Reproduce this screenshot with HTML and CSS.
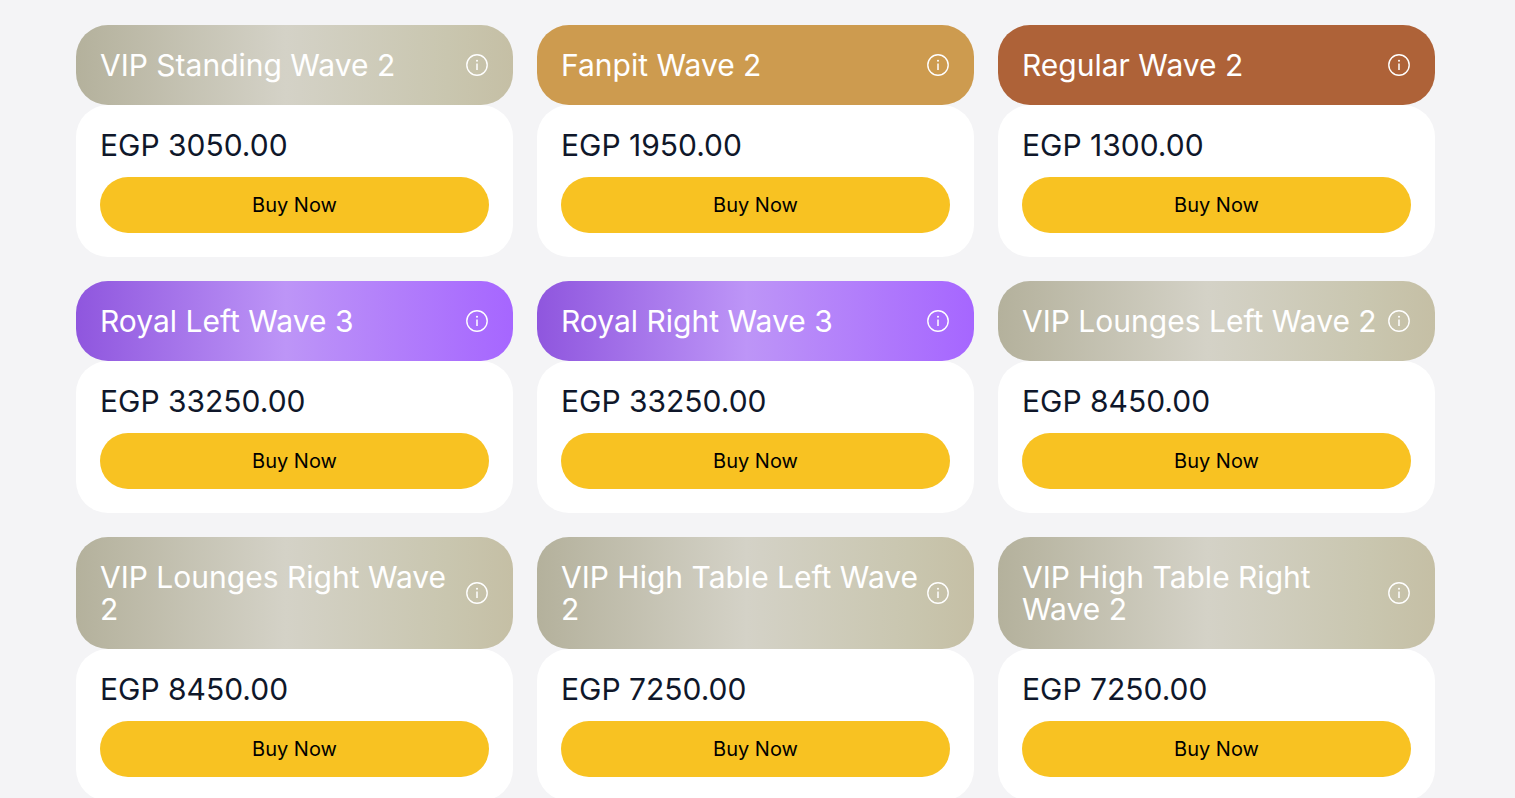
FILE: index.html
```html
<!DOCTYPE html>
<html lang="en">

<head>
  <meta charset="UTF-8">
  <meta name="viewport" content="width=device-width, initial-scale=1.0">
  <title>Tickets</title>
  <link rel="stylesheet" href="styles.css">
</head>

<body>
  <svg class="sprite" xmlns="http://www.w3.org/2000/svg">
    <symbol id="icon-info" viewBox="0 0 24 24">
      <circle cx="12" cy="12" r="10.2" fill="none" stroke="currentColor" stroke-width="1.4"></circle>
      <path d="M12 10.5v6.5" fill="none" stroke="currentColor" stroke-width="1.5"></path>
      <circle cx="12" cy="7.8" r="1" fill="currentColor"></circle>
    </symbol>
  </svg>

  <main class="tickets">
    <article class="ticket">
      <header class="ticket-header silver">
        <h2>VIP Standing Wave 2</h2>
        <button class="info-btn" aria-label="Details"><svg><use href="#icon-info"></use></svg></button>
      </header>
      <div class="ticket-body">
        <p class="price">EGP 3050.00</p>
        <button class="buy-btn">Buy Now</button>
      </div>
    </article>

    <article class="ticket">
      <header class="ticket-header gold">
        <h2>Fanpit Wave 2</h2>
        <button class="info-btn" aria-label="Details"><svg><use href="#icon-info"></use></svg></button>
      </header>
      <div class="ticket-body">
        <p class="price">EGP 1950.00</p>
        <button class="buy-btn">Buy Now</button>
      </div>
    </article>

    <article class="ticket">
      <header class="ticket-header bronze">
        <h2>Regular Wave 2</h2>
        <button class="info-btn" aria-label="Details"><svg><use href="#icon-info"></use></svg></button>
      </header>
      <div class="ticket-body">
        <p class="price">EGP 1300.00</p>
        <button class="buy-btn">Buy Now</button>
      </div>
    </article>

    <article class="ticket">
      <header class="ticket-header royal">
        <h2>Royal Left Wave 3</h2>
        <button class="info-btn" aria-label="Details"><svg><use href="#icon-info"></use></svg></button>
      </header>
      <div class="ticket-body">
        <p class="price">EGP 33250.00</p>
        <button class="buy-btn">Buy Now</button>
      </div>
    </article>

    <article class="ticket">
      <header class="ticket-header royal">
        <h2>Royal Right Wave 3</h2>
        <button class="info-btn" aria-label="Details"><svg><use href="#icon-info"></use></svg></button>
      </header>
      <div class="ticket-body">
        <p class="price">EGP 33250.00</p>
        <button class="buy-btn">Buy Now</button>
      </div>
    </article>

    <article class="ticket">
      <header class="ticket-header silver">
        <h2>VIP Lounges Left Wave 2</h2>
        <button class="info-btn" aria-label="Details"><svg><use href="#icon-info"></use></svg></button>
      </header>
      <div class="ticket-body">
        <p class="price">EGP 8450.00</p>
        <button class="buy-btn">Buy Now</button>
      </div>
    </article>

    <article class="ticket">
      <header class="ticket-header silver">
        <h2>VIP Lounges Right Wave 2</h2>
        <button class="info-btn" aria-label="Details"><svg><use href="#icon-info"></use></svg></button>
      </header>
      <div class="ticket-body">
        <p class="price">EGP 8450.00</p>
        <button class="buy-btn">Buy Now</button>
      </div>
    </article>

    <article class="ticket">
      <header class="ticket-header silver">
        <h2>VIP High Table Left Wave 2</h2>
        <button class="info-btn" aria-label="Details"><svg><use href="#icon-info"></use></svg></button>
      </header>
      <div class="ticket-body">
        <p class="price">EGP 7250.00</p>
        <button class="buy-btn">Buy Now</button>
      </div>
    </article>

    <article class="ticket">
      <header class="ticket-header silver">
        <h2>VIP High Table Right Wave 2</h2>
        <button class="info-btn" aria-label="Details"><svg><use href="#icon-info"></use></svg></button>
      </header>
      <div class="ticket-body">
        <p class="price">EGP 7250.00</p>
        <button class="buy-btn">Buy Now</button>
      </div>
    </article>
  </main>
</body>

</html>
```
FILE: styles.css
```css
:root {
  --page: #f4f4f6;
  --text: #0f172a;
  --yellow: #f8c222;
  --gold: #cd9b4f;
  --bronze: #ae6238;
}

* {
  margin: 0;
  padding: 0;
  box-sizing: border-box;
  font-family: 'Inter', sans-serif;
}

body {
  background-color: var(--page);
  color: var(--text);
}

.sprite {
  display: none;
}

.tickets {
  display: grid;
  grid-template-columns: repeat(3, 1fr);
  gap: 24px;
  padding: 25px 80px 24px 76px;
}

.ticket-header {
  display: flex;
  align-items: center;
  justify-content: space-between;
  padding: 24px;
  border-radius: 32px;
  color: #fff;
}

.ticket-header h2 {
  font-size: 30px;
  font-weight: 400;
  line-height: 32px;
}

.silver {
  background: linear-gradient(to right, #b4b19c, #d4d2c7 48%, #c9c6af 85%, #c5bfa5);
}

.gold {
  background: var(--gold);
}

.bronze {
  background: var(--bronze);
}

.royal {
  background: linear-gradient(to right, #8f56de, #bd95f7 48%, #a666ff);
}

.info-btn {
  flex-shrink: 0;
  width: 24px;
  height: 24px;
  border: none;
  background: none;
  color: inherit;
  cursor: pointer;
}

.info-btn svg {
  display: block;
  width: 24px;
  height: 24px;
}

.ticket-body {
  padding: 24px;
  border-radius: 32px;
  background-color: #fff;
}

.price {
  margin-bottom: 16px;
  font-size: 30px;
  line-height: 32px;
}

.buy-btn {
  display: block;
  width: 100%;
  height: 56px;
  border: none;
  border-radius: 28px;
  background-color: var(--yellow);
  color: #000;
  font-size: 20px;
  cursor: pointer;
}

@media (max-width: 1000px) {
  .tickets {
    grid-template-columns: 1fr;
    padding: 24px;
  }
}
```
